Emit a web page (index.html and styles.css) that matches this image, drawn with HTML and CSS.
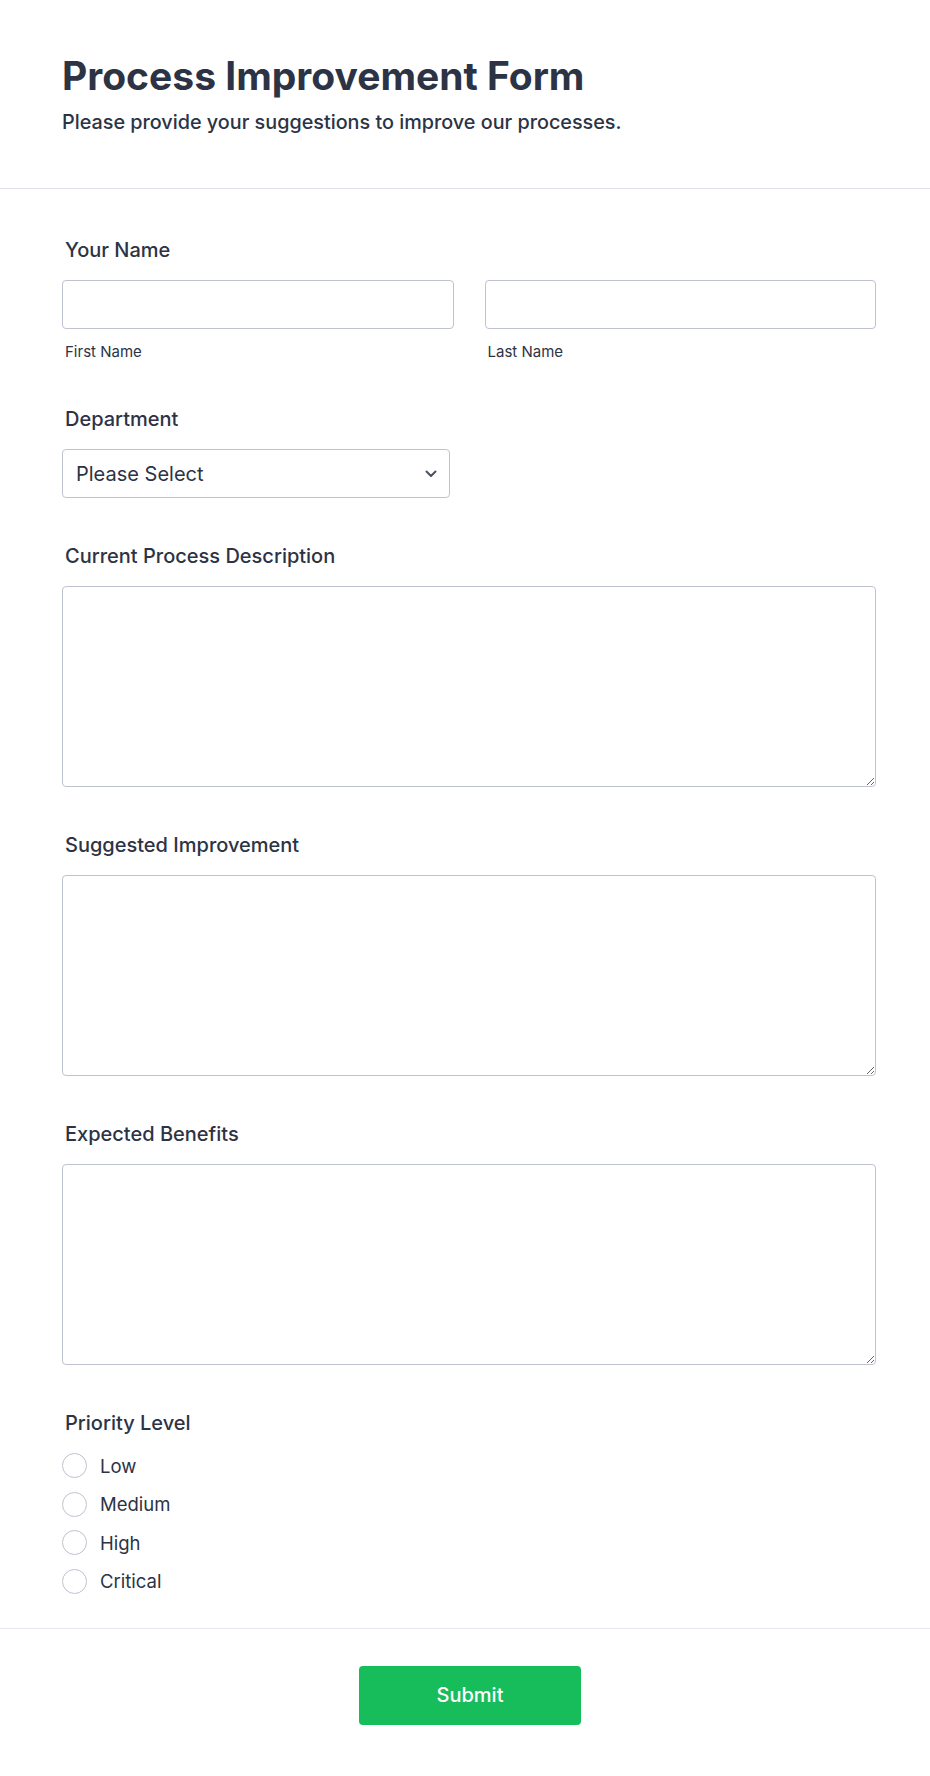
FILE: index.html
```html
<!DOCTYPE html>
<html lang="en">
<head>
  <meta charset="UTF-8">
  <meta name="viewport" content="width=device-width, initial-scale=1.0">
  <title>Process Improvement Form</title>
  <link rel="stylesheet" href="styles.css">
</head>
<body>
  <header class="form-header">
    <h1>Process Improvement Form</h1>
    <p class="subtitle">Please provide your suggestions to improve our processes.</p>
  </header>

  <form class="form-body" onsubmit="return false;">
    <div class="field">
      <label class="field-label">Your Name</label>
      <div class="name-row">
        <div class="name-part">
          <input type="text" class="text-input" id="firstName">
          <label class="sublabel" for="firstName">First Name</label>
        </div>
        <div class="name-part">
          <input type="text" class="text-input" id="lastName">
          <label class="sublabel" for="lastName">Last Name</label>
        </div>
      </div>
    </div>

    <div class="field">
      <label class="field-label" for="department">Department</label>
      <div class="select-wrap">
        <select id="department" class="select-input">
          <option>Please Select</option>
          <option>Operations</option>
          <option>Finance</option>
          <option>Human Resources</option>
          <option>IT</option>
          <option>Sales</option>
        </select>
        <svg class="chevron" width="12" height="8" viewBox="0 0 12 8"><path d="M1.5 1.5 L6 6 L10.5 1.5" fill="none" stroke="#4a5163" stroke-width="2" stroke-linecap="round" stroke-linejoin="round"/></svg>
      </div>
    </div>

    <div class="field">
      <label class="field-label" for="current">Current Process Description</label>
      <textarea id="current" class="text-area"></textarea>
    </div>

    <div class="field">
      <label class="field-label" for="suggested">Suggested Improvement</label>
      <textarea id="suggested" class="text-area"></textarea>
    </div>

    <div class="field">
      <label class="field-label" for="benefits">Expected Benefits</label>
      <textarea id="benefits" class="text-area"></textarea>
    </div>

    <div class="field">
      <span class="field-label">Priority Level</span>
      <div class="radio-list">
        <label class="radio-item"><input type="radio" name="priority" value="low"> Low</label>
        <label class="radio-item"><input type="radio" name="priority" value="medium"> Medium</label>
        <label class="radio-item"><input type="radio" name="priority" value="high"> High</label>
        <label class="radio-item"><input type="radio" name="priority" value="critical"> Critical</label>
      </div>
    </div>
  </form>

  <footer class="form-footer">
    <button type="button" class="submit-btn">Submit</button>
  </footer>
</body>
</html>
```

FILE: styles.css
```css
body {
  margin: 0;
  font-family: Inter, 'Noto Sans', sans-serif;
  background-color: #fff;
  color: #2c3345;
}
.form-header {
  padding: 52px 54px 54px 62px;
  border-bottom: 1px solid #dfe1ea;
}
.form-header h1 {
  margin: 0;
  font-size: 39px;
  line-height: 48px;
  font-weight: 700;
}
.subtitle {
  margin: 10px 0 0;
  font-size: 19.8px;
  line-height: 24px;
  font-weight: 500;
}
.form-body {
  padding: 49px 54px 34px 62px;
}
.field + .field {
  margin-top: 46px;
}
.field-label {
  display: block;
  margin: 0 0 18px 3px;
  font-size: 20px;
  line-height: 24px;
  font-weight: 500;
}
.name-row {
  display: flex;
  gap: 31px;
}
.name-part {
  flex: 1;
}
.text-input, .select-input, .text-area {
  box-sizing: border-box;
  width: 100%;
  border: 1px solid #bfc3d0;
  border-radius: 4px;
  font-family: inherit;
  font-size: 20px;
  color: #2c3345;
  background: #fff;
}
.text-input {
  display: block;
  height: 49px;
  padding: 0 14px;
}
.sublabel {
  display: block;
  margin: 14px 0 0 3px;
  font-size: 15px;
  line-height: 18px;
}
.select-wrap {
  position: relative;
  width: 388px;
}
.select-input {
  display: block;
  height: 49px;
  padding: 0 40px 0 13px;
  appearance: none;
  -webkit-appearance: none;
}
.chevron {
  position: absolute;
  right: 13px;
  top: 21px;
  pointer-events: none;
}
.text-area {
  display: block;
  height: 201px;
  padding: 12px 14px;
  resize: vertical;
}
.radio-list {
  display: flex;
  flex-direction: column;
  gap: 13.5px;
}
.radio-item {
  display: flex;
  align-items: center;
  gap: 13px;
  font-size: 18.5px;
  line-height: 24px;
}
.radio-item input {
  appearance: none;
  -webkit-appearance: none;
  margin: 0;
  width: 25px;
  height: 25px;
  border: 1px solid #bfc3d0;
  border-radius: 50%;
  background: #fff;
}
.radio-item input:checked {
  border: 7px solid #2e69ff;
}
.form-footer {
  border-top: 1px solid #e6e8f0;
  padding: 37px 54px 52px 64px;
  display: flex;
  justify-content: center;
}
.submit-btn {
  width: 222px;
  height: 59px;
  border: none;
  border-radius: 4px;
  background-color: #18bd5b;
  color: #fff;
  font-family: inherit;
  font-size: 20px;
  font-weight: 500;
  cursor: pointer;
}
```
